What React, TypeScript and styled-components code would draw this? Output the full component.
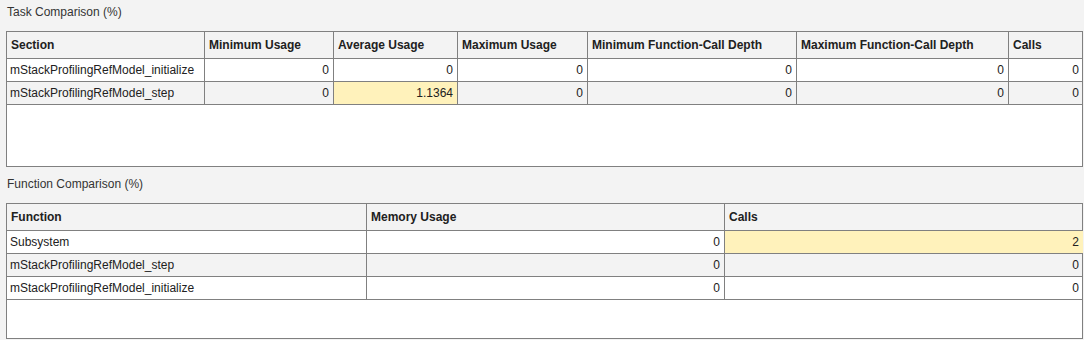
import styled, { createGlobalStyle } from 'styled-components';

const GlobalStyle = createGlobalStyle`
  html, body {
    margin: 0;
    padding: 0;
    background: #f3f3f3;
  }
  body {
    font-family: 'Liberation Sans', Arial, sans-serif;
    font-size: 12px;
    color: #212121;
  }
`;

const Page = styled.div`
  display: flex;
  flex-direction: column;
  gap: 5px;
  width: 1084px;
  padding: 0 1px 0 6px;
  box-sizing: border-box;
`;

const Section = styled.section`
  display: flex;
  flex-direction: column;
`;

const Title = styled.div`
  height: 31px;
  line-height: 25px;
  padding-left: 1px;
  color: #333333;
`;

const Frame = styled.div`
  height: 136px;
  box-sizing: border-box;
  border: 1px solid #808080;
  background: #ffffff;
  display: flex;
  flex-direction: column;
`;

const Row = styled.div<{ $cols: string; $head?: boolean; $alt?: boolean }>`
  display: grid;
  grid-template-columns: ${(p) => p.$cols};
  height: ${(p) => (p.$head ? '27px' : '23px')};
  background: ${(p) => (p.$head || p.$alt ? '#f3f3f3' : '#ffffff')};
  font-weight: ${(p) => (p.$head ? 'bold' : 'normal')};
`;

const Cell = styled.div<{ $num?: boolean; $mark?: boolean; $head?: boolean }>`
  box-sizing: border-box;
  display: flex;
  align-items: center;
  justify-content: ${(p) => (p.$num ? 'flex-end' : 'flex-start')};
  padding: ${(p) => (p.$head ? '0 4px 1px 4px' : '0 4px 1px 3px')};
  border-right: 1px solid #808080;
  border-bottom: 1px solid #808080;
  white-space: nowrap;
  overflow: hidden;
  background: ${(p) => (p.$mark ? '#fff2bb' : 'transparent')};
  &:last-child {
    border-right: none;
  }
`;

type TableProps = {
  cols: number[];
  head: string[];
  rows: string[][];
  marked: [number, number][];
};

const Table = ({ cols, head, rows, marked }: TableProps) => {
  const template = cols.map((c) => `${c}px`).join(' ');
  const isMarked = (r: number, c: number) =>
    marked.some(([mr, mc]) => mr === r && mc === c);

  return (
    <Frame>
      <Row $cols={template} $head>
        {head.map((h) => (
          <Cell key={h} $head>
            {h}
          </Cell>
        ))}
      </Row>
      {rows.map((row, r) => (
        <Row key={r} $cols={template} $alt={r % 2 === 1}>
          {row.map((v, c) => (
            <Cell key={c} $num={c > 0} $mark={isMarked(r, c)}>
              {v}
            </Cell>
          ))}
        </Row>
      ))}
    </Frame>
  );
};

export default function App() {
  return (
    <Page>
      <GlobalStyle />
      <Section>
        <Title>Task Comparison (%)</Title>
        <Table
          cols={[198, 129, 124, 130, 209, 212, 74]}
          head={[
            'Section',
            'Minimum Usage',
            'Average Usage',
            'Maximum Usage',
            'Minimum Function-Call Depth',
            'Maximum Function-Call Depth',
            'Calls',
          ]}
          rows={[
            ['mStackProfilingRefModel_initialize', '0', '0', '0', '0', '0', '0'],
            ['mStackProfilingRefModel_step', '0', '1.1364', '0', '0', '0', '0'],
          ]}
          marked={[[1, 2]]}
        />
      </Section>
      <Section>
        <Title>Function Comparison (%)</Title>
        <Table
          cols={[360, 358, 358]}
          head={['Function', 'Memory Usage', 'Calls']}
          rows={[
            ['Subsystem', '0', '2'],
            ['mStackProfilingRefModel_step', '0', '0'],
            ['mStackProfilingRefModel_initialize', '0', '0'],
          ]}
          marked={[[0, 2]]}
        />
      </Section>
    </Page>
  );
}
